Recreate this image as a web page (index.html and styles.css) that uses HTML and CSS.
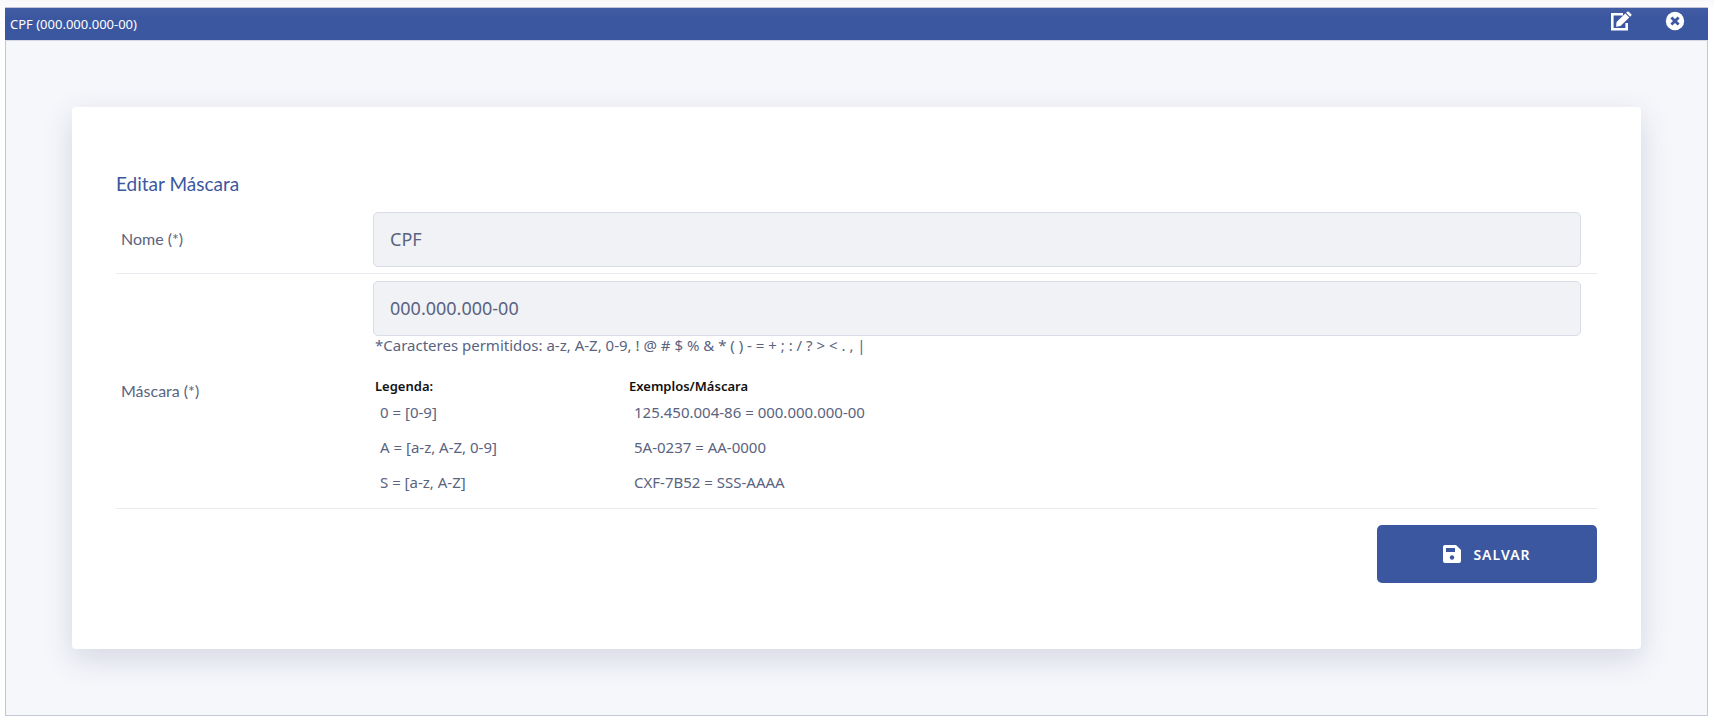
FILE: index.html
```html
<!DOCTYPE html>
<html lang="pt-br">
	<head>
		<meta charset="utf-8">
		<meta name="viewport" content="width=device-width, initial-scale=1">
		<title>Editar Máscara</title>
		<link rel="stylesheet" href="styles.css">
	</head>
	<body>
		<div class="panel">
			<div class="panel-header">
				<span>CPF (000.000.000-00)</span>
				<div class="panel-actions">
					<button type="button" class="icon-btn" aria-label="Editar">
						<svg width="22" height="20" viewBox="0 0 22 20">
							<path d="M13 3.300H2.300V18.200H16.700V12" fill="none" stroke="#fff" stroke-width="2.600"/>
							<path d="M6.500 11L15.300 2.500L19.300 6.500L10.500 15.100L6.100 15.700Z" fill="#fff"/>
							<path d="M16.100 1.700L17.300 .7Q18 .1 18.700 .7L21.300 3.300Q21.900 4 21.300 4.600L20.100 5.800Z" fill="#fff"/>
						</svg>
					</button>
					<button type="button" class="icon-btn" aria-label="Fechar">
						<svg width="20" height="20" viewBox="0 0 20 20">
							<circle cx="10" cy="10" r="9.200" fill="#fff"/>
							<path d="M6.400 6.400L13.600 13.600M13.600 6.400L6.400 13.600" stroke="#3b57a0" stroke-width="2.800"/>
						</svg>
					</button>
				</div>
			</div>
			<div class="panel-body">
				<form class="card">
					<h1 class="title">Editar Máscara</h1>
					<div class="row">
						<label class="label" for="nome">Nome (*)</label>
						<div class="field">
							<input class="input" type="text" id="nome" value="CPF">
						</div>
					</div>
					<div class="row">
						<label class="label" for="mascara">Máscara (*)</label>
						<div class="field">
							<input class="input" type="text" id="mascara" value="000.000.000-00">
							<p class="hint">*Caracteres permitidos: a-z, A-Z, 0-9, ! @ # $ % &amp; * ( ) - = + ; : / ? &gt; &lt; . , |</p>
							<table class="legend">
								<tr>
									<th>Legenda:</th>
									<th>Exemplos/Máscara</th>
								</tr>
								<tr>
									<td>0 = [0-9]</td>
									<td>125.450.004-86 = 000.000.000-00</td>
								</tr>
								<tr>
									<td>A = [a-z, A-Z, 0-9]</td>
									<td>5A-0237 = AA-0000</td>
								</tr>
								<tr>
									<td>S = [a-z, A-Z]</td>
									<td>CXF-7B52 = SSS-AAAA</td>
								</tr>
							</table>
						</div>
					</div>
					<div class="buttons">
						<button type="submit" class="save">
							<svg width="18" height="18" viewBox="0 0 18 18">
								<path d="M2 0H13L18 5V16Q18 18 16 18H2Q0 18 0 16V2Q0 0 2 0Z" fill="#fff"/>
								<path d="M3 3H12V7H3Z" fill="#3b57a0"/>
								<circle cx="9" cy="12.500" r="2.200" fill="#3b57a0"/>
							</svg>
							SALVAR
						</button>
					</div>
				</form>
			</div>
		</div>
	</body>
</html>
```
FILE: styles.css
```css
* {
	box-sizing: border-box;
}
body {
	margin: 0;
	padding: 7px 6px 5px 5px;
	background: linear-gradient(#f8f8fb, #fff 12px);
	color: #5a6380;
	font-family: "Noto Sans", "Open Sans", sans-serif;
	font-size: 15px;
}
.panel {
	border: 1px solid #c3c6d9;
	background-color: #f5f7fb;
}
.panel-header {
	display: flex;
	justify-content: space-between;
	align-items: flex-start;
	height: 33px;
	margin: 0 -1px;
	padding: 0 23px 0 5px;
	border-bottom: 1px solid #d5d8e4;
	background: linear-gradient(#435da5, #3b57a0 10px);
	color: #fff;
	font-size: 13px;
	line-height: 32px;
}
.panel-actions {
	display: flex;
	gap: 33px;
	padding-top: 3px;
}
.icon-btn {
	display: flex;
	padding: 0;
	border: 0;
	background: none;
	cursor: pointer;
}
.panel-body {
	padding: 66px;
}
.card {
	padding: 64px 44px 66px;
	border-radius: 4px;
	background-color: #fff;
	box-shadow: 0 10px 30px rgba(62, 62, 105, .17);
}
.title {
	margin: 0 0 16px;
	color: #3b57a0;
	font-family: Lato, sans-serif;
	font-size: 19px;
	font-weight: 400;
	line-height: 25px;
}
.row {
	display: flex;
	align-items: center;
	padding-bottom: 6px;
	border-bottom: 1px solid #e9eaf0;
}
.row + .row {
	padding-top: 7px;
}
.label {
	width: 257px;
	padding: 0 0 2px 5px;
	font-family: Lato, sans-serif;
	font-size: 16px;
	line-height: 20px;
}
.field {
	flex: 1;
	padding-right: 16px;
}
.input {
	display: block;
	width: 100%;
	height: 55px;
	padding: 0 16px 2px;
	border: 1px solid #dadce8;
	border-radius: 5px;
	background-color: #f1f2f6;
	color: #5a6380;
	font-family: inherit;
	font-size: 18px;
}
.input:focus {
	outline: none;
	border-color: #3b57a0;
}
.hint {
	margin: 0 0 21px;
	padding-left: 2px;
	line-height: 18px;
}
.legend {
	border-collapse: collapse;
}
.legend th {
	padding: 0 0 0 2px;
	color: #111;
	font-size: 13px;
	font-weight: 600;
	line-height: 22px;
	text-align: left;
}
.legend td {
	height: 35px;
	padding: 0 0 5px 7px;
}
.legend th:first-child {
	width: 254px;
}
.buttons {
	display: flex;
	justify-content: flex-end;
	padding-top: 16px;
}
.save {
	display: flex;
	justify-content: center;
	align-items: center;
	gap: 12px;
	width: 220px;
	height: 58px;
	border: 0;
	border-radius: 5px;
	background-color: #3b57a0;
	color: #fff;
	font-family: inherit;
	font-size: 14px;
	font-weight: 600;
	letter-spacing: 1px;
	cursor: pointer;
}
.save:hover {
	background-color: #324b8c;
}
```
